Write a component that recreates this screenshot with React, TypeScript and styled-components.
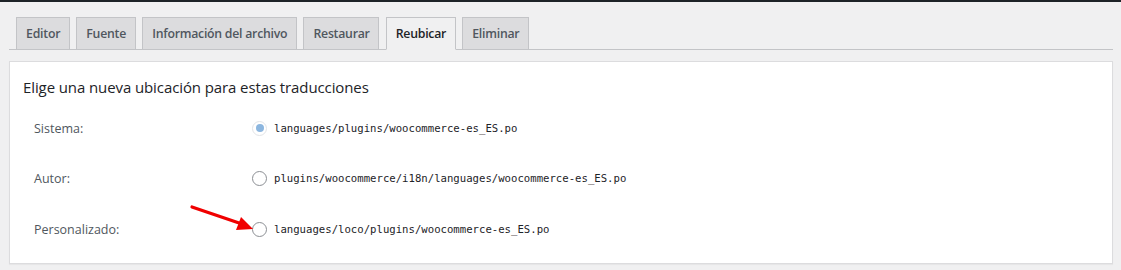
import React from "react";
import styled, { createGlobalStyle } from "styled-components";

const Global = createGlobalStyle`
  html, body { margin: 0; padding: 0; }
  body {
    background: #f0f0f1;
    font-family: "Open Sans", "Noto Sans", sans-serif;
    color: #3c434a;
  }
`;

const Page = styled.div`
  position: relative;
  width: 1121px;
  height: 270px;
  overflow: hidden;
`;

const TopBar = styled.div`
  height: 2px;
  background: #1d2327;
`;

const Content = styled.div`
  margin: 0 8px 0 9px;
`;

const TabBar = styled.nav`
  display: flex;
  padding: 15px 0 0 0.5px;
  border-bottom: 1px solid #c3c4c7;
`;

const Tab = styled.div<{ $active?: boolean }>`
  box-sizing: border-box;
  height: 33px;
  margin: 0 0 -1px 6.6px;
  padding: 0 8.5px 0 9px;
  display: flex;
  align-items: center;
  font-size: 12.3px;
  font-weight: 600;
  letter-spacing: -0.25px;
  border: 1px solid #c3c4c7;
  border-bottom-color: ${(p) => (p.$active ? "#f0f0f1" : "#c3c4c7")};
  background: ${(p) => (p.$active ? "#f0f0f1" : "#dcdcde")};
  color: ${(p) => (p.$active ? "#1d2327" : "#50575e")};
`;

const Panel = styled.section`
  margin-top: 11px;
  box-sizing: border-box;
  height: 203px;
  background: #fff;
  border: 1px solid #dcdcde;
  box-shadow: 0 1px 1px rgba(0, 0, 0, 0.04);
  padding: 14px 13px 0;
`;

const Heading = styled.h2`
  margin: 0;
  font-size: 15px;
  line-height: 22px;
  font-weight: 400;
  color: #1d2327;
  letter-spacing: -0.1px;
`;

const Rows = styled.div`
  display: flex;
  flex-direction: column;
  margin-top: 5px;
`;

const Row = styled.div`
  display: grid;
  grid-template-columns: 218px 1fr;
  align-items: center;
  height: 50.5px;
  padding-left: 11px;
`;

const Label = styled.span`
  font-size: 12.5px;
  color: #50575e;
`;

const Choice = styled.label`
  display: flex;
  align-items: center;
  gap: 7px;
`;

const Radio = styled.span<{ $checked?: boolean }>`
  box-sizing: border-box;
  width: 15px;
  height: 15px;
  border-radius: 50%;
  background: #fff;
  border: 1px solid ${(p) => (p.$checked ? "#e2e4e7" : "#8c8f94")};
  display: flex;
  align-items: center;
  justify-content: center;
  &::after {
    content: "";
    display: ${(p) => (p.$checked ? "block" : "none")};
    width: 8px;
    height: 8px;
    border-radius: 50%;
    background: #8cb6df;
  }
`;

const Path = styled.code`
  font-family: "DejaVu Sans Mono", "Liberation Mono", monospace;
  font-size: 10.65px;
  color: #1d2327;
`;

const Arrow = styled.svg`
  position: absolute;
  left: 186px;
  top: 200px;
`;

const tabs = [
  "Editor",
  "Fuente",
  "Información del archivo",
  "Restaurar",
  "Reubicar",
  "Eliminar",
];

const options = [
  { label: "Sistema:", path: "languages/plugins/woocommerce-es_ES.po", checked: true },
  { label: "Autor:", path: "plugins/woocommerce/i18n/languages/woocommerce-es_ES.po" },
  { label: "Personalizado:", path: "languages/loco/plugins/woocommerce-es_ES.po" },
];

export default function App() {
  return (
    <Page>
      <Global />
      <TopBar />
      <Content>
        <TabBar>
          {tabs.map((t) => (
            <Tab key={t} $active={t === "Reubicar"}>
              {t}
            </Tab>
          ))}
        </TabBar>
        <Panel>
          <Heading>Elige una nueva ubicación para estas traducciones</Heading>
          <Rows>
            {options.map((o) => (
              <Row key={o.label}>
                <Label>{o.label}</Label>
                <Choice>
                  <Radio $checked={o.checked} />
                  <Path>{o.path}</Path>
                </Choice>
              </Row>
            ))}
          </Rows>
        </Panel>
      </Content>
      <Arrow width="72" height="36" viewBox="0 0 72 36">
        <line x1="6" y1="7" x2="56" y2="24" stroke="#f00000" strokeWidth="3.2" strokeLinecap="round" />
        <polygon points="67,29 50,30 55,17" fill="#f00000" />
      </Arrow>
    </Page>
  );
}
